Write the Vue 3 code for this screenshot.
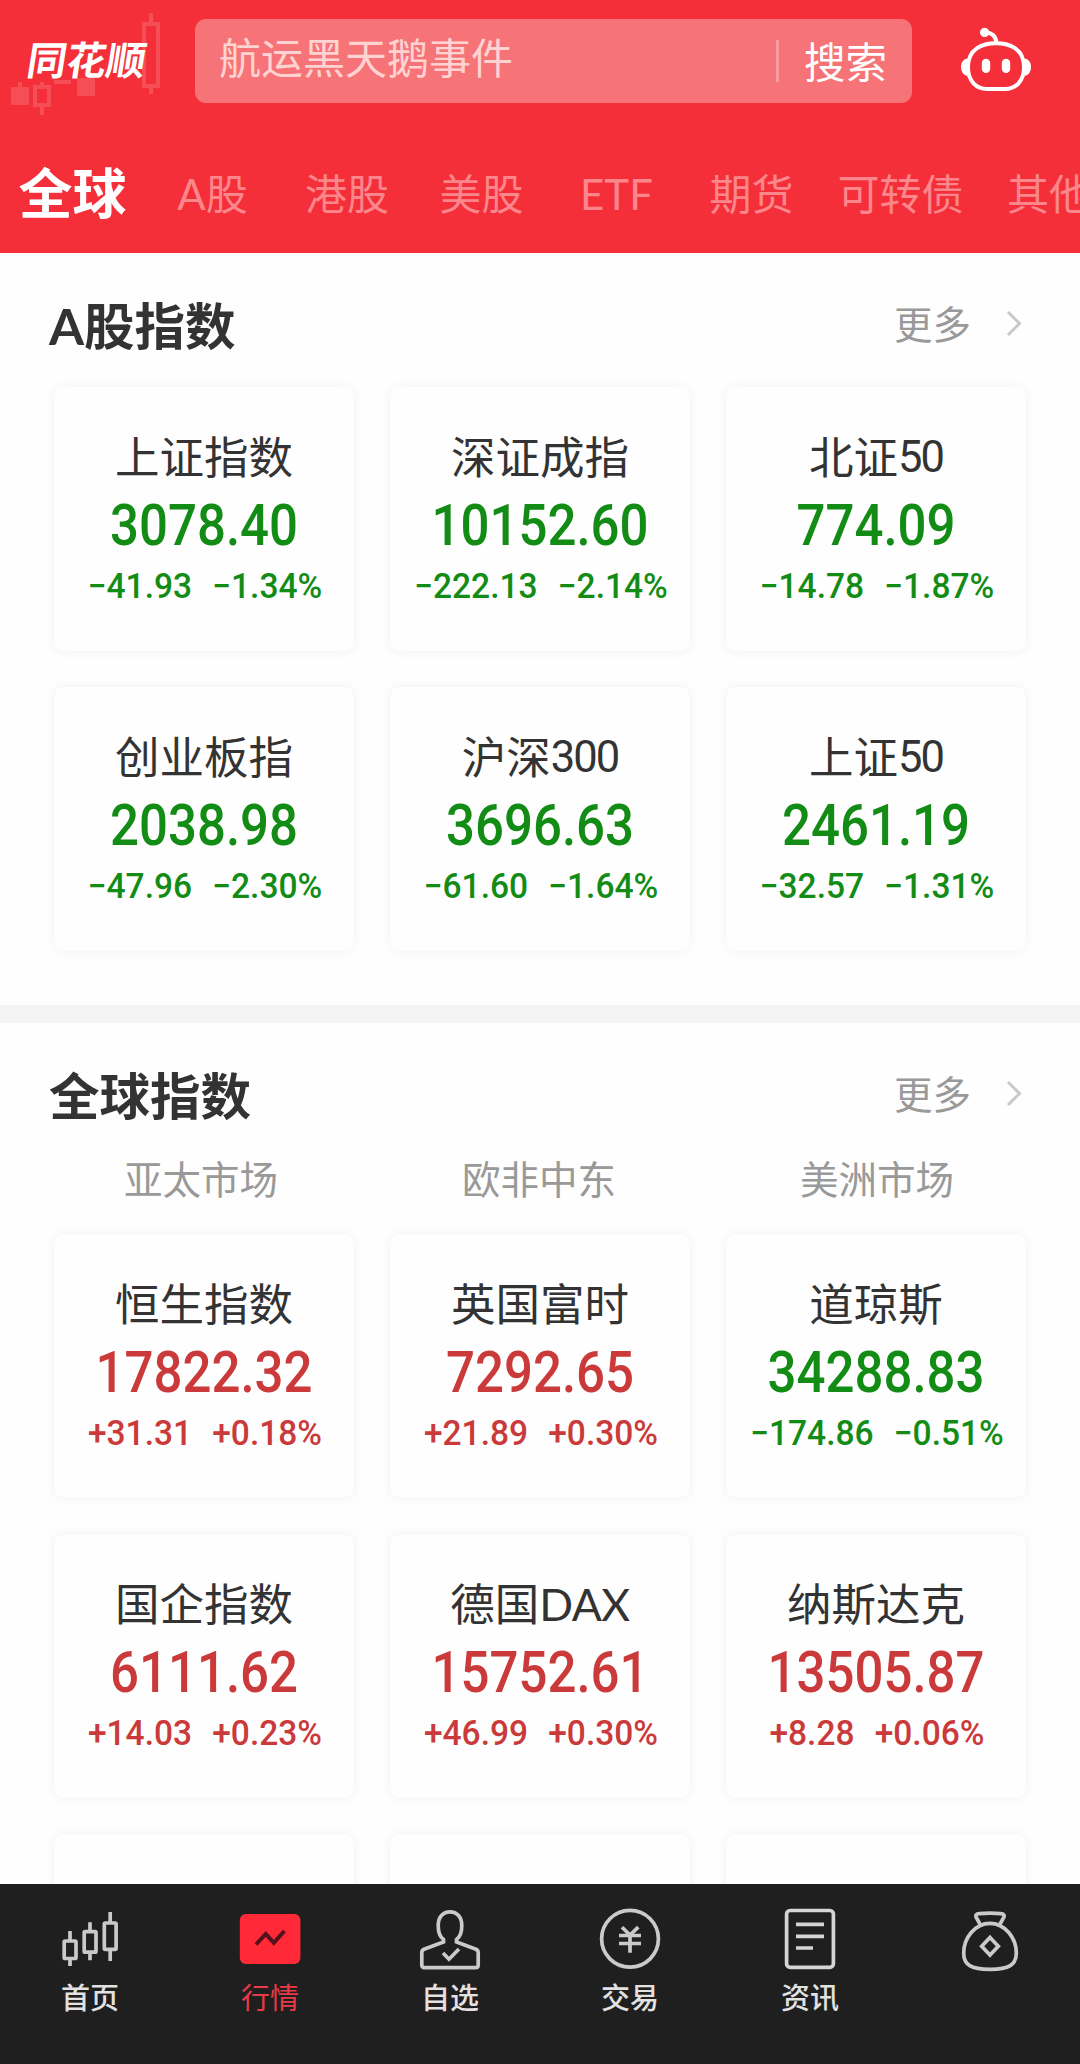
<script setup>
const tabs = [
  { label: '全球', active: true, width: 145 },
  { label: 'A股', width: 135 },
  { label: '港股', width: 134 },
  { label: '美股', width: 135 },
  { label: 'ETF', width: 135 },
  { label: '期货', width: 135 },
  { label: '可转债', width: 163 },
  { label: '其他', width: 134 },
]

const aShares = [
  { name: '上证指数', price: '3078.40', diff: '−41.93', pct: '−1.34%' },
  { name: '深证成指', price: '10152.60', diff: '−222.13', pct: '−2.14%' },
  { name: '北证', num: '50', price: '774.09', diff: '−14.78', pct: '−1.87%' },
  { name: '创业板指', price: '2038.98', diff: '−47.96', pct: '−2.30%' },
  { name: '沪深', num: '300', price: '3696.63', diff: '−61.60', pct: '−1.64%' },
  { name: '上证', num: '50', price: '2461.19', diff: '−32.57', pct: '−1.31%' },
]

const regions = ['亚太市场', '欧非中东', '美洲市场']

const world = [
  { name: '恒生指数', price: '17822.32', diff: '+31.31', pct: '+0.18%', up: true },
  { name: '英国富时', price: '7292.65', diff: '+21.89', pct: '+0.30%', up: true },
  { name: '道琼斯', price: '34288.83', diff: '−174.86', pct: '−0.51%' },
  { name: '国企指数', price: '6111.62', diff: '+14.03', pct: '+0.23%', up: true },
  { name: '德国', latin: 'DAX', price: '15752.61', diff: '+46.99', pct: '+0.30%', up: true },
  { name: '纳斯达克', price: '13505.87', diff: '+8.28', pct: '+0.06%', up: true },
]

const sections = [
  { title: 'A股指数', items: aShares, regions: null, extra: 0 },
  { title: '全球指数', items: world, regions, extra: 3 },
]

const nav = [
  { key: 'home', label: '首页' },
  { key: 'quotes', label: '行情', active: true },
  { key: 'picks', label: '自选' },
  { key: 'trade', label: '交易' },
  { key: 'news', label: '资讯' },
  { key: 'wealth', label: '' },
]
</script>

<template>
  <div class="app">
    <header class="header">
      <div class="topbar">
        <div class="logo">
          <svg class="logo-candles" width="170" height="120" viewBox="0 0 170 120" fill="none">
            <g stroke-width="4">
              <path d="M20 82v5M42 82v3M42 107v8M54 82h17M151 13v9M151 88v6" />
              <rect x="35" y="87" width="14" height="18" />
              <rect x="144" y="24" width="14" height="62" />
            </g>
            <path class="solid" d="M11 87h18v18H11zM77 78h18v18H77z" />
          </svg>
          <span class="logo-text">同花顺</span>
        </div>
        <div class="search">
          <span class="placeholder">航运黑天鹅事件</span>
          <i class="split"></i>
          <span class="go">搜索</span>
        </div>
        <svg class="robot" width="72" height="70" viewBox="0 0 72 70" fill="none" stroke="#fff" stroke-width="4">
          <circle cx="24.6" cy="8.4" r="4.6" fill="#fff" stroke="none" />
          <path d="M25 8.5C31 8 36 12 36.3 18.5" />
          <path d="M36 19.3C50 19.3 64 25 64 43C64 58 55 65 45 65H27C17 65 8 58 8 43C8 25 22 19.3 36 19.3Z" />
          <path d="M7 34.5Q1 36 1 43T7 52ZM65 34.5Q71 36 71 43T65 52Z" fill="#fff" stroke="none" />
          <rect x="21.8" y="34.7" width="8.4" height="14.4" rx="4.2" fill="#fff" stroke="none" />
          <rect x="41.8" y="34.7" width="8.4" height="14.4" rx="4.2" fill="#fff" stroke="none" />
        </svg>
      </div>
      <nav class="tabs">
        <span
          v-for="t in tabs"
          :key="t.label"
          class="tab"
          :class="{ active: t.active }"
          :style="{ width: t.width + 'px' }"
        >{{ t.label }}</span>
      </nav>
    </header>

    <main class="content">
      <section v-for="s in sections" :key="s.title" class="section">
        <div class="section-head">
          <h2>{{ s.title }}</h2>
          <div class="more">
            <span>更多</span>
            <svg width="16" height="28" viewBox="0 0 16 28" fill="none" stroke="#c8c8c8" stroke-width="3">
              <path d="M2 2L13.5 13.5L2 25" />
            </svg>
          </div>
        </div>
        <div v-if="s.regions" class="regions">
          <span v-for="r in s.regions" :key="r">{{ r }}</span>
        </div>
        <div class="grid">
          <article v-for="q in s.items" :key="q.price" class="card" :class="q.up ? 'up' : 'down'">
            <div class="name">{{ q.name }}<span v-if="q.num" class="num">{{ q.num }}</span><span v-if="q.latin" class="latin">{{ q.latin }}</span></div>
            <div class="price">{{ q.price }}</div>
            <div class="change"><span>{{ q.diff }}</span><span>{{ q.pct }}</span></div>
          </article>
          <article v-for="n in s.extra" :key="'extra' + n" class="card"></article>
        </div>
      </section>
    </main>

    <footer class="navbar">
      <div v-for="n in nav" :key="n.key" class="nav-item" :class="{ active: n.active }">
        <svg width="64" height="66" viewBox="0 0 64 66" fill="none" stroke="#cbcaca" stroke-width="3.7">
          <g v-if="n.key === 'home'">
            <path d="M12 25v9M12 53v7M32 16.3v9M32 47v7.3M52.2 6v10M52.2 44v11" />
            <rect x="6.2" y="35" width="11.8" height="17.5" rx="1" />
            <rect x="26.2" y="25.6" width="11.8" height="20.6" rx="1" />
            <rect x="46.3" y="17" width="11.8" height="26.3" rx="1" />
          </g>
          <g v-else-if="n.key === 'quotes'">
            <rect x="1.8" y="8" width="60.6" height="50" rx="6" fill="#ff2938" stroke="none" />
            <path d="M18 38.5L27.8 28L35.8 36.8L46.4 25" stroke="#54131a" stroke-width="4" />
          </g>
          <g v-else-if="n.key === 'picks'">
            <path d="M25.5 36V33.5C22 31 20.2 27 20.2 19.5C20.2 11 25 5.8 32 5.8S43.8 11 43.8 19.5C43.8 27 42 31 38.5 33.5V36L58 43.3Q60.2 44.2 60.2 46.8V59Q60.2 61.7 57.5 61.7H6.5Q3.8 61.7 3.8 59V46.8Q3.8 44.2 6 43.3Z" />
            <path d="M25 47L31 53.2L41 43" />
          </g>
          <g v-else-if="n.key === 'trade'">
            <circle cx="32" cy="32.8" r="28.4" />
            <path d="M21 29.5H43M21 37.5H43M32 28V46.7M24 21.2L32 29L40.3 21.2" />
          </g>
          <g v-else-if="n.key === 'news'" stroke="#d6d4d4">
            <rect x="8.6" y="4.5" width="46.8" height="56.8" rx="3.5" />
            <path d="M18 18.3H46M18 30.3H46M18 42H35" />
          </g>
          <g v-else>
            <path d="M22.5 19L18 11Q17 8 21 7.7Q32 6.5 43 7.7Q47 8 46 11L41.5 19" />
            <path d="M32 17.3C47 17.3 58.3 32 58.3 47C58.3 59 51 63.3 32 63.3S5.7 59 5.7 47C5.7 32 17 17.3 32 17.3Z" />
            <path d="M32 31.5L40.3 40.2L32 49L23.7 40.2Z" />
          </g>
        </svg>
        <span class="label">{{ n.label }}</span>
      </div>
    </footer>
  </div>
</template>

<style>
body {
  margin: 0;
  background: #fefefe;
}
</style>

<style scoped>
.app {
  display: flex;
  flex-direction: column;
  width: 1080px;
  height: 2064px;
  overflow: hidden;
  background: #fefefe;
  font-family: Lato, "Noto Sans CJK SC", sans-serif;
  color: #333;
  white-space: nowrap;
}

.header {
  flex: none;
  height: 253px;
  background: #f42f39;
}
.topbar {
  display: flex;
  height: 122px;
}
.logo {
  position: relative;
  width: 195px;
}
.logo-candles {
  position: absolute;
  left: 0;
  top: 0;
  stroke: rgba(255, 255, 255, 0.15);
}
.logo-candles .solid {
  fill: rgba(255, 255, 255, 0.15);
  stroke: none;
}
.logo-text {
  position: relative;
  display: block;
  margin: 36px 0 0 28px;
  width: 120px;
  font-family: "Noto Sans CJK SC", sans-serif;
  font-size: 39.5px;
  line-height: 44px;
  font-weight: 700;
  color: #fff;
  transform: skewX(-9deg);
}
.search {
  display: flex;
  align-items: center;
  box-sizing: border-box;
  width: 717px;
  height: 84px;
  margin-top: 19px;
  padding: 0 25px 0 24px;
  border-radius: 11px;
  background: #f67377;
  font-family: "Noto Sans CJK SC", sans-serif;
  font-size: 42px;
  line-height: 60px;
  color: #fff;
}
.placeholder {
  flex: 1;
  margin-top: -11px;
  color: #ffd3d2;
}
.split {
  width: 3px;
  height: 42px;
  margin-right: 25px;
  background: #fb9da0;
}
.go {
  margin-top: -3px;
  font-size: 41.5px;
}
.robot {
  margin: 24px 0 0 48px;
}
.tabs {
  display: flex;
  height: 131px;
  overflow: hidden;
}
.tab {
  flex: none;
  text-align: center;
  font-size: 42px;
  line-height: 60px;
  padding-top: 42px;
  color: #fb868b;
}
.tab.active {
  font-size: 54px;
  font-weight: 700;
  color: #fff;
}

.content {
  flex: 1;
  min-height: 0;
  overflow: hidden;
}
.section + .section {
  border-top: 18px solid #f4f4f4;
}
.section-head {
  display: flex;
  justify-content: space-between;
  align-items: center;
  height: 134px;
  padding: 7px 58px 0 49px;
  box-sizing: border-box;
}
h2 {
  margin: 4px 0 0;
  font-size: 50.5px;
  line-height: 64px;
  font-weight: 700;
}
.more {
  display: flex;
  align-items: center;
  gap: 35px;
  font-size: 38.5px;
  line-height: 50px;
  color: #999;
}
.regions {
  display: grid;
  grid-template-columns: repeat(3, 1fr);
  height: 77px;
  margin-top: -3px;
  padding: 0 34px 3px 32px;
  font-size: 38.5px;
  line-height: 50px;
  text-align: center;
  color: #999;
}
.grid {
  display: grid;
  grid-template-columns: repeat(3, 300px);
  grid-auto-rows: 264px;
  gap: 36px;
  padding: 0 54px 54px;
}
.card {
  box-sizing: border-box;
  padding-top: 39px;
  border-radius: 10px;
  background: #fefefe;
  box-shadow: 0 0 12px rgba(0, 0, 0, 0.055);
  text-align: center;
}
.name {
  height: 65px;
  font-size: 44.5px;
  line-height: 62px;
}
.num {
  position: relative;
  top: -2px;
  font-family: Roboto, sans-serif;
  font-size: 43.5px;
  letter-spacing: -2px;
}
.latin {
  letter-spacing: -0.5px;
}
.price {
  height: 70px;
  font-family: Roboto, sans-serif;
  font-size: 57px;
  line-height: 70px;
  font-weight: 500;
  transform: scaleX(0.895);
}
.change {
  display: flex;
  justify-content: center;
  gap: 21px;
  padding-left: 2px;
  font-family: Roboto, sans-serif;
  font-size: 35px;
  line-height: 51px;
  font-weight: 500;
  transform: scaleX(0.958);
}
.down .price,
.down .change {
  color: #138c16;
}
.up .price,
.up .change {
  color: #cb3a3b;
}

.navbar {
  flex: none;
  display: flex;
  height: 180px;
  background: #1f1f1f;
}
.nav-item {
  display: flex;
  flex-direction: column;
  align-items: center;
  width: 180px;
  padding-top: 22px;
}
.label {
  margin-top: 6px;
  font-size: 29px;
  line-height: 40px;
  font-weight: 500;
  color: #e3e1e1;
}
.active .label {
  font-weight: 400;
  color: #e93a47;
}
</style>
